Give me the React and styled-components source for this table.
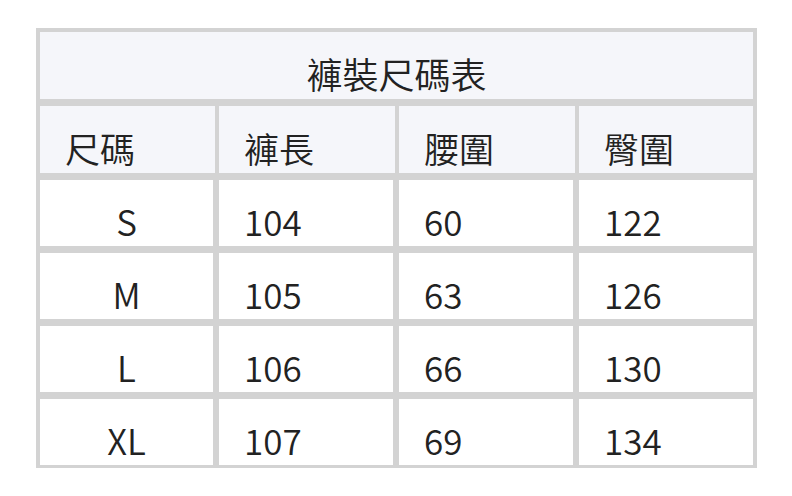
import React from 'react';
import styled, { createGlobalStyle } from 'styled-components';

const GlobalStyle = createGlobalStyle`
  html, body {
    margin: 0;
    padding: 0;
    background: #ffffff;
  }
  body {
    font-family: 'Noto Sans CJK TC', 'Noto Sans', sans-serif;
    color: #222222;
  }
`;

const Page = styled.div`
  width: 792px;
  height: 496px;
  padding: 28px 0 0 36px;
  box-sizing: border-box;
`;

const Table = styled.div`
  width: 721px;
  box-sizing: border-box;
  background: #d3d3d3;
  padding: 4px;
  display: flex;
  flex-direction: column;
  gap: 7px;
  padding-bottom: 3px;
`;

const Row = styled.div`
  display: grid;
  grid-template-columns: ${p => p.$header ? '175px 176px 176px 174px' : '173px 174px 174px 174px'};
  column-gap: ${p => p.$header ? '4px' : '6px'};
  height: ${p => p.$height || 66}px;
`;

const Cell = styled.div`
  display: flex;
  align-items: flex-end;
  justify-content: ${p => p.$center ? 'center' : 'flex-start'};
  padding: 0 0 8px ${p => p.$center ? '0' : '25px'};
  background: ${p => p.$light ? '#f5f6fa' : '#ffffff'};
  font-size: 35px;
  font-weight: 350;
  line-height: 1;
  box-sizing: border-box;
`;

const TitleCell = styled(Cell)`
  height: 67px;
  justify-content: center;
  padding-left: 0;
  font-size: 36px;
`;

const headers = ['尺碼', '褲長', '腰圍', '臀圍'];

const rows = [
  ['S', '104', '60', '122'],
  ['M', '105', '63', '126'],
  ['L', '106', '66', '130'],
  ['XL', '107', '69', '134'],
];

const App = () => {
  return (
    <>
      <GlobalStyle />
      <Page>
        <Table>
          <TitleCell $light>褲裝尺碼表</TitleCell>
          <Row $header $height={67}>
            {headers.map(h => (
              <Cell key={h} $light>{h}</Cell>
            ))}
          </Row>
          {rows.map(r => (
            <Row key={r[0]}>
              {r.map((v, i) => (
                <Cell key={i} $center={i === 0}>{v}</Cell>
              ))}
            </Row>
          ))}
        </Table>
      </Page>
    </>
  );
};

export default App;
